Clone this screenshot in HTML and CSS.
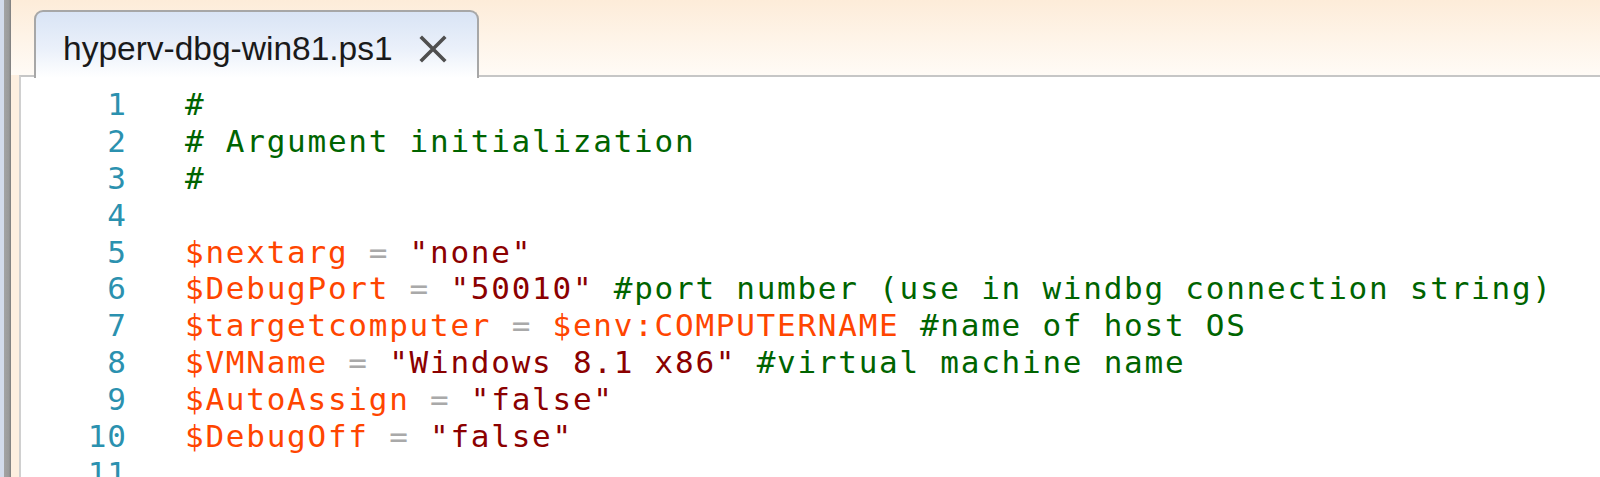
FILE: index.html
```html
<!DOCTYPE html>
<html lang="en">
<head>
  <meta charset="UTF-8" />
  <title>hyperv-dbg-win81.ps1</title>
  <link rel="stylesheet" href="styles.css">
</head>
<body>
  <div class="frame-edge"></div>
  <div class="frame-border"></div>

  <div class="pane">
    <div class="tabs">
      <div class="tab">
        <span class="tab-title">hyperv-dbg-win81.ps1</span>
        <svg class="tab-close" width="28" height="28" viewBox="0 0 28 28">
          <path d="M3 3 L25 25 M25 3 L3 25" stroke="#4f4f4f" stroke-width="3.6" stroke-linecap="square" fill="none"/>
        </svg>
      </div>
    </div>

    <div class="editor">
      <div class="line"><span class="ln">1</span><span class="code"><span class="cm">#</span></span></div>
      <div class="line"><span class="ln">2</span><span class="code"><span class="cm"># Argument initialization</span></span></div>
      <div class="line"><span class="ln">3</span><span class="code"><span class="cm">#</span></span></div>
      <div class="line"><span class="ln">4</span><span class="code"></span></div>
      <div class="line"><span class="ln">5</span><span class="code"><span class="var">$nextarg</span> <span class="op">=</span> <span class="str">"none"</span></span></div>
      <div class="line"><span class="ln">6</span><span class="code"><span class="var">$DebugPort</span> <span class="op">=</span> <span class="str">"50010"</span> <span class="cm">#port number (use in windbg connection string)</span></span></div>
      <div class="line"><span class="ln">7</span><span class="code"><span class="var">$targetcomputer</span> <span class="op">=</span> <span class="var">$env:COMPUTERNAME</span> <span class="cm">#name of host OS</span></span></div>
      <div class="line"><span class="ln">8</span><span class="code"><span class="var">$VMName</span> <span class="op">=</span> <span class="str">"Windows 8.1 x86"</span> <span class="cm">#virtual machine name</span></span></div>
      <div class="line"><span class="ln">9</span><span class="code"><span class="var">$AutoAssign</span> <span class="op">=</span> <span class="str">"false"</span></span></div>
      <div class="line"><span class="ln">10</span><span class="code"><span class="var">$DebugOff</span> <span class="op">=</span> <span class="str">"false"</span></span></div>
      <div class="line"><span class="ln">11</span><span class="code"></span></div>
    </div>
  </div>
</body>
</html>
```

FILE: styles.css
```css
* {
  box-sizing: border-box;
}

html, body {
  margin: 0;
  padding: 0;
  height: 100%;
  overflow: hidden;
}

body {
  display: flex;
  background-color: #fff;
}

/* window frame on the far left */
.frame-edge {
  width: 4px;
  background-color: #d3dbeb;
}

.frame-border {
  width: 7px;
  background: linear-gradient(to right, #a3a3a3, #9a9a9a 70%, #7c7c7c);
}

.pane {
  flex: 1;
  display: flex;
  flex-direction: column;
  min-height: 0;
  background-color: #fdefe0;
}

/* tab strip */
.tabs {
  flex-shrink: 0;
  height: 75px;
  display: flex;
  align-items: flex-end;
  padding-left: 23px;
  background: linear-gradient(#fdecd9, #fffbf6);
}

.tab {
  position: relative;
  z-index: 2;
  display: flex;
  align-items: center;
  gap: 26px;
  height: 68px;
  margin-bottom: -3px;
  padding: 0 30px 0 27px;
  border: 2px solid #a7a7a7;
  border-bottom: none;
  border-radius: 9px 9px 0 0;
  background: linear-gradient(#d9e4f5, #eaf0fa 55%, #ffffff);
}

.tab-title {
  font-family: "Liberation Sans", Arial, sans-serif;
  font-size: 33.5px;
  color: #1a1a1a;
  margin-top: 8px;
}

.tab-close {
  display: block;
  margin-top: 8px;
}

/* code area */
.editor {
  flex: 1;
  min-height: 0;
  overflow: hidden;
  margin-left: 8px;
  padding-top: 9px;
  border-left: 2px solid #d0d0d0;
  border-top: 2px solid #c6c6c6;
  background-color: #fff;
  font-family: "DejaVu Sans Mono", "Liberation Mono", monospace;
  font-size: 31px;
}

.line {
  display: flex;
  flex-shrink: 0;
  height: 36.9px;
  line-height: 36.9px;
  white-space: pre;
}

.ln {
  width: 106px;
  text-align: right;
  color: #2b91af;
  letter-spacing: 1px;
}

.code {
  margin-left: 58px;
  letter-spacing: 1.75px;
}

.cm {
  color: #006400;
}

.var {
  color: #ff4500;
}

.str {
  color: #8b0000;
}

.op {
  color: #a9a9a9;
}
```
